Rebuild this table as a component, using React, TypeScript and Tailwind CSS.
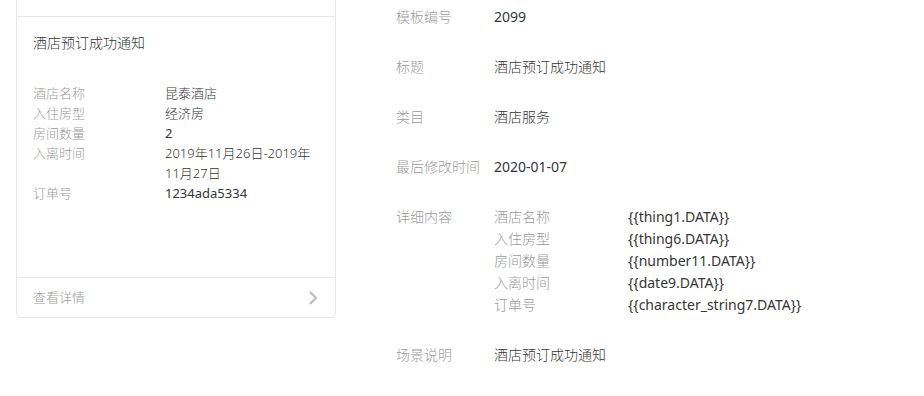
import React from 'react';

const font = { fontFamily: '"Noto Sans", "Noto Sans CJK SC", sans-serif' };

// 纯英文数字的值用常规字重，中文用细体，更接近原图
const isLatin = (s: string) => /^[\x00-\x7f]+$/.test(s);

const previewRows: [string, string][] = [
  ['酒店名称', '昆泰酒店'],
  ['入住房型', '经济房'],
  ['房间数量', '2'],
  ['入离时间', '2019年11月26日-2019年11月27日'],
  ['订单号', '1234ada5334'],
];

const detailRows: [string, string][] = [
  ['酒店名称', '{{thing1.DATA}}'],
  ['入住房型', '{{thing6.DATA}}'],
  ['房间数量', '{{number11.DATA}}'],
  ['入离时间', '{{date9.DATA}}'],
  ['订单号', '{{character_string7.DATA}}'],
];

const Value: React.FC<{ text: string }> = ({ text }) => (
  <div className={isLatin(text) ? 'text-[#353535] font-normal' : 'text-[#353535]'}>{text}</div>
);

const InfoRow: React.FC<{ label: string; children: React.ReactNode }> = ({ label, children }) => (
  <div className="flex mb-[28px] leading-[22px] text-[14px]">
    <div className="w-[98px] shrink-0 text-[#9a9a9a]">{label}</div>
    <div className="flex-1">{children}</div>
  </div>
);

const App: React.FC = () => {
  return (
    <div className="w-[924px] h-[396px] bg-white overflow-hidden flex font-light" style={font}>
      {/* 消息预览卡片 */}
      <div className="pl-4 shrink-0">
        <div className="w-[320px] -mt-[30px] border border-[#e7e7e7] rounded-[4px] bg-white">
          <div className="h-[46px] border-b border-[#e7e7e7]"></div>
          <div className="h-[260px] px-4 pt-4">
            <div className="text-[14px] leading-[20px] text-[#353535]">酒店预订成功通知</div>
            <div className="mt-[30px] grid grid-cols-[132px_1fr] text-[13px] leading-[20px]">
              {previewRows.map(([k, v]) => (
                <React.Fragment key={k}>
                  <div className="text-[#9a9a9a]">{k}</div>
                  <Value text={v} />
                </React.Fragment>
              ))}
            </div>
          </div>
          <div className="h-[40px] border-t border-[#e7e7e7] px-4 flex items-center justify-between">
            <span className="text-[13px] text-[#9a9a9a]">查看详情</span>
            <svg width="10" height="14" viewBox="0 0 10 14" className="mr-[1px]">
              <path d="M2 1 L8 7 L2 13" fill="none" stroke="#b5b5b5" strokeWidth="1.8" />
            </svg>
          </div>
        </div>
      </div>

      {/* 模板详情 */}
      <div className="ml-[60px] pt-[6px] flex-1">
        <InfoRow label="模板编号"><Value text="2099" /></InfoRow>
        <InfoRow label="标题"><Value text="酒店预订成功通知" /></InfoRow>
        <InfoRow label="类目"><Value text="酒店服务" /></InfoRow>
        <InfoRow label="最后修改时间"><Value text="2020-01-07" /></InfoRow>
        <InfoRow label="详细内容">
          <div className="grid grid-cols-[134px_1fr]">
            {detailRows.map(([k, v]) => (
              <React.Fragment key={k}>
                <div className="text-[#9a9a9a]">{k}</div>
                <Value text={v} />
              </React.Fragment>
            ))}
          </div>
        </InfoRow>
        <InfoRow label="场景说明"><Value text="酒店预订成功通知" /></InfoRow>
      </div>
    </div>
  );
};

export default App;
